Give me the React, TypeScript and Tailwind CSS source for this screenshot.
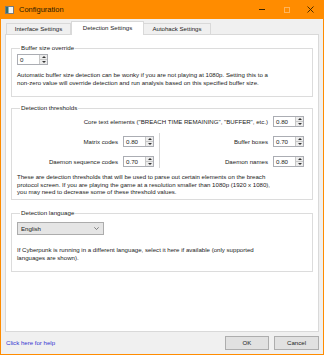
import React from "react";

const font = { fontFamily: '"Liberation Sans", Arial, sans-serif' };

function Spinner({ value, className = "" }: { value: string; className?: string }) {
  return (
    <div className={`flex h-[11px] w-[31px] items-stretch border border-[#abadb3] bg-white ${className}`}>
      <span className="flex-1 pl-[2px] text-[6.2px] leading-[9px] text-[#222]">{value}</span>
      <div className="flex w-[8px] flex-col border-l border-[#c8c8c8] bg-[#ececec]">
        <div className="flex flex-1 items-center justify-center border-b border-[#c8c8c8]">
          <svg width="4" height="2" viewBox="0 0 4 2">
            <path d="M0 2 L2 0 L4 2 Z" fill="#333" />
          </svg>
        </div>
        <div className="flex flex-1 items-center justify-center">
          <svg width="4" height="2" viewBox="0 0 4 2">
            <path d="M0 0 L2 2 L4 0 Z" fill="#333" />
          </svg>
        </div>
      </div>
    </div>
  );
}

function Group({ title, className = "", children }: { title: string; className?: string; children: React.ReactNode }) {
  return (
    <fieldset className={`border border-[#dcdcdc] ${className}`}>
      <legend className="ml-[3px] px-[1px] text-[6.2px] leading-[8px] text-[#222]">{title}</legend>
      {children}
    </fieldset>
  );
}

function Lines({ lines, className = "" }: { lines: string[]; className?: string }) {
  return (
    <div className={`text-[6.1px] leading-[7.5px] text-[#222] ${className}`}>
      {lines.map((l) => (
        <div key={l} className="whitespace-nowrap">
          {l}
        </div>
      ))}
    </div>
  );
}

function Row({ label, value }: { label: string; value: string }) {
  return (
    <div className="flex items-center gap-[5px]">
      <span className="whitespace-nowrap text-[6.1px] text-[#222]">{label}</span>
      <Spinner value={value} />
    </div>
  );
}

export default function App() {
  return (
    <div className="flex h-[355px] w-[324px] flex-col bg-[#ff8c00]" style={font}>
      {/* Title bar */}
      <div className="flex h-[19px] shrink-0 items-center">
        <svg width="9" height="8" viewBox="0 0 9 8" className="ml-[5px]">
          <rect x="0.5" y="0.5" width="8" height="7" fill="#f4f4f4" stroke="#7a7a7a" />
          <rect x="1" y="1" width="2.5" height="6" fill="#2f6f73" />
        </svg>
        <span className="ml-[5px] text-[7.5px] text-[#2a1a00]">Configuration</span>
        <div className="ml-auto flex items-center">
          <div className="flex w-[25px] justify-center">
            <div className="h-px w-[6px] bg-[#3a2400]" />
          </div>
          <div className="flex w-[25px] justify-center">
            <div className="h-[6px] w-[6px] border border-[#ffb45a]" />
          </div>
          <div className="flex w-[25px] justify-center pr-[3px]">
            <svg width="7" height="7" viewBox="0 0 7 7">
              <path d="M0.5 0.5 L6.5 6.5 M6.5 0.5 L0.5 6.5" stroke="#3a2400" strokeWidth="0.9" />
            </svg>
          </div>
        </div>
      </div>

      {/* Body */}
      <div className="mx-px mb-px flex flex-1 flex-col bg-[#f0f0f0] px-[4px]">
        {/* Tabs */}
        <div className="flex h-[15px] items-end pl-[1px] pt-[2px]">
          <div className="flex h-[11px] w-[65px] items-center justify-center border border-b-0 border-[#d9d9d9] bg-[#f0f0f0] text-[6.1px] text-[#222]">
            Interface Settings
          </div>
          <div className="relative z-10 -mb-px flex h-[14px] w-[73px] items-center justify-center border border-b-0 border-[#d9d9d9] bg-white pb-[1px] text-[6.1px] text-[#222]">
            Detection Settings
          </div>
          <div className="flex h-[11px] w-[67px] items-center justify-center border border-b-0 border-l-0 border-[#d9d9d9] bg-[#f0f0f0] text-[6.1px] text-[#222]">
            Autohack Settings
          </div>
        </div>

        {/* Panel */}
        <div className="flex h-[298px] flex-col border border-[#d9d9d9] bg-white px-[5px] pt-[9px]">
          <Group title="Buffer size override" className="h-[53px] px-[5px]">
            <Spinner value="0" className="mt-[2px]" />
            <Lines
              className="mt-[6px]"
              lines={[
                "Automatic buffer size detection can be wonky if you are not playing at 1080p. Setting this to a",
                "non-zero value will override detection and run analysis based on this specified buffer size.",
              ]}
            />
          </Group>

          <Group title="Detection thresholds" className="mt-[7px] h-[96px] pl-[5px] pr-[8px]">
            <div className="mt-[4px] flex justify-end">
              <Row label={'Core text elements ("BREACH TIME REMAINING", "BUFFER", etc.)'} value="0.80" />
            </div>
            <div className="mt-[9px] flex">
              <div className="flex w-[137px] flex-col items-end gap-[9px]">
                <Row label="Matrix codes" value="0.80" />
                <Row label="Daemon sequence codes" value="0.70" />
              </div>
              <div className="-mt-[3px] ml-[5px] h-[35px] w-px bg-[#d6d6d6]" />
              <div className="flex flex-1 flex-col items-end gap-[9px]">
                <Row label="Buffer boxes" value="0.70" />
                <Row label="Daemon names" value="0.80" />
              </div>
            </div>
            <Lines
              className="mt-[5px]"
              lines={[
                "These are detection thresholds that will be used to parse out certain elements on the breach",
                "protocol screen. If you are playing the game at a resolution smaller than 1080p (1920 x 1080),",
                "you may need to decrease some of these threshold values.",
              ]}
            />
          </Group>

          <Group title="Detection language" className="mt-[9px] h-[63px] px-[5px]">
            <div className="mt-[5px] flex h-[13px] w-[87px] items-center border border-[#acacac] bg-[#e5e5e5] pl-[3px] pr-[4px]">
              <span className="flex-1 text-[6.1px] text-[#222]">English</span>
              <svg width="5" height="3" viewBox="0 0 5 3">
                <path d="M0.3 0.3 L2.5 2.5 L4.7 0.3" stroke="#555" strokeWidth="0.7" fill="none" />
              </svg>
            </div>
            <Lines
              className="mt-[11px]"
              lines={[
                "If Cyberpunk is running in a different language, select it here if available (only supported",
                "languages are shown).",
              ]}
            />
          </Group>
        </div>

        {/* Footer */}
        <div className="flex flex-1 items-center pl-[1px]">
          <span className="text-[6.1px] text-[#3535d0]">Click here for help</span>
          <div className="ml-auto flex gap-[5px]">
            <button className="flex h-[14px] w-[44px] items-center justify-center border border-[#adadad] bg-[#e1e1e1] text-[6.1px] text-[#222]">
              OK
            </button>
            <button className="flex h-[14px] w-[45px] items-center justify-center border border-[#adadad] bg-[#e1e1e1] text-[6.1px] text-[#222]">
              Cancel
            </button>
          </div>
        </div>
      </div>
    </div>
  );
}
